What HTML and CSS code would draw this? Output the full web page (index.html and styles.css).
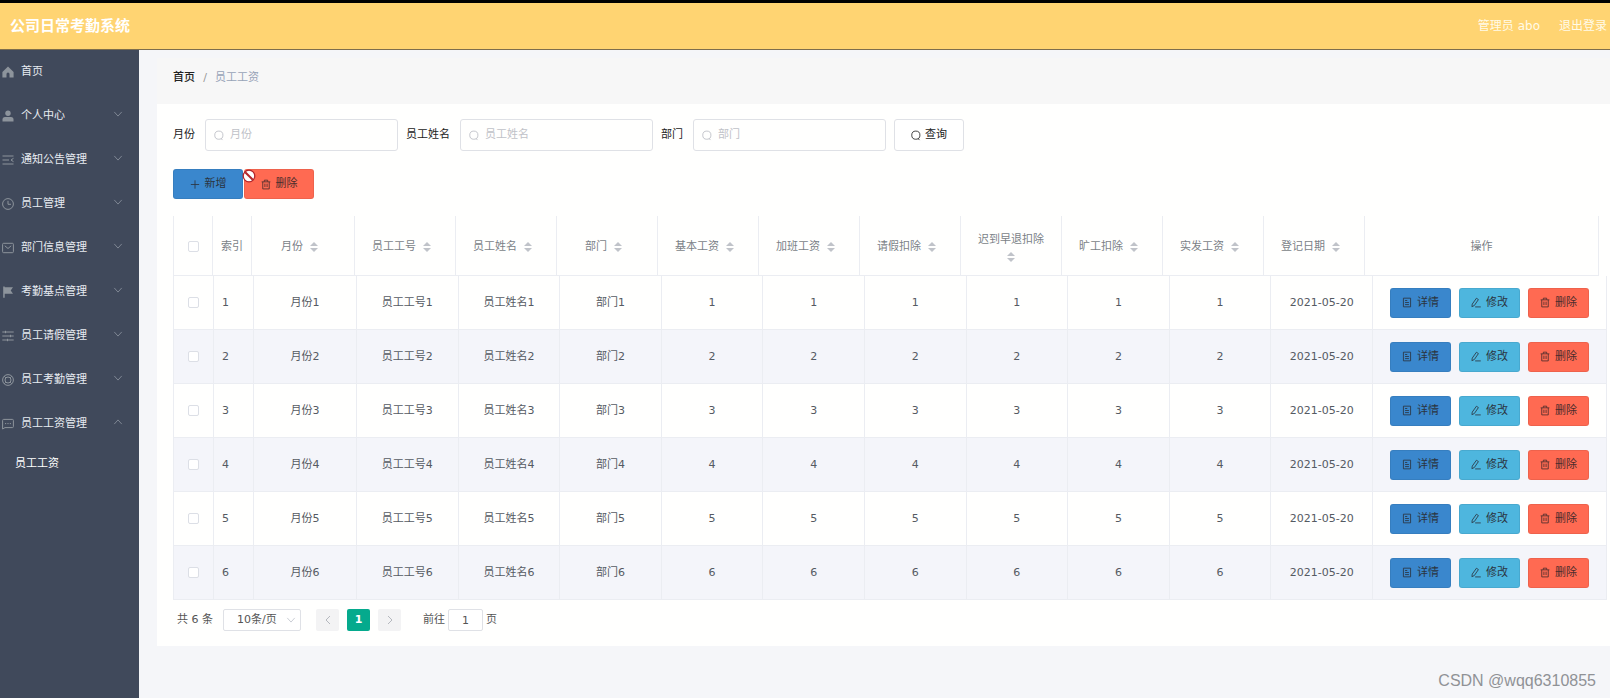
FILE: index.html
```html
<!DOCTYPE html>
<html lang="zh-CN">
<head>
<meta charset="utf-8">
<title>公司日常考勤系统</title>
<link rel="stylesheet" href="styles.css">
</head>
<body>
<svg class="sprite" aria-hidden="true">
  <symbol id="i-home" viewBox="0 0 12 12"><path fill="currentColor" d="M6 .6 11.6 6v5.6H7.5V8a1.5 1.5 0 0 0-3 0v3.600H.4V6z"/></symbol>
  <symbol id="i-user" viewBox="0 0 12 12"><circle cx="6" cy="3.200" r="2.700" fill="currentColor"/><path fill="currentColor" d="M.5 11.500V9.500Q.5 7 3 7h6q2.500 0 2.500 2.500v2z"/></symbol>
  <symbol id="i-fold" viewBox="0 0 12 12"><path class="ln" d="M.5 2h11M.5 6h6.500M.5 10h11M11.500 4.300 9 6l2.500 1.700"/></symbol>
  <symbol id="i-clock" viewBox="0 0 12 12"><circle class="ln" cx="6" cy="6" r="5.400"/><path class="ln" d="M6 2.800v3.500h3"/></symbol>
  <symbol id="i-mail" viewBox="0 0 12 12"><rect class="ln" x=".6" y="1.300" width="10.800" height="9.400" rx="1"/><path class="ln" d="M2.800 3.800 6 6.500l3.200-2.700"/></symbol>
  <symbol id="i-flag" viewBox="0 0 12 12"><path fill="currentColor" d="M1.200.5h1.500v.8H11L8.700 4.500 11 7.700H2.700v4H1.200z"/></symbol>
  <symbol id="i-oper" viewBox="0 0 12 12"><path class="ln" d="M.3 2h11.400M.3 6h11.400M.3 10h11.400M3.500.8v2.400M8.500 4.800v2.400M5.500 8.800v2.400"/></symbol>
  <symbol id="i-help" viewBox="0 0 12 12"><circle class="ln" cx="6" cy="6" r="5.400"/><circle class="ln" cx="6" cy="6" r="3"/><path class="ln" d="m2.200 2.200 1.600 1.600M9.800 2.200 8.200 3.800M2.200 9.800l1.600-1.600M9.800 9.800 8.200 8.200"/></symbol>
  <symbol id="i-chat" viewBox="0 0 12 12"><path class="ln" d="M1.600 1.400h8.800q1 0 1 1v6.200q0 1-1 1H3L.6 11V2.400q0-1 1-1z"/><path class="ln" d="M3 5.600h1.200M5.400 5.600h1.200M7.800 5.600H9"/></symbol>
  <symbol id="i-down" viewBox="0 0 12 12"><path class="ln" d="m1.500 3.500 4.500 5 4.500-5"/></symbol>
  <symbol id="i-up" viewBox="0 0 12 12"><path class="ln" d="m1.500 8.500 4.500-5 4.500 5"/></symbol>
  <symbol id="i-left" viewBox="0 0 12 12"><path class="ln" d="M8 2 4 6l4 4"/></symbol>
  <symbol id="i-right" viewBox="0 0 12 12"><path class="ln" d="m4 2 4 4-4 4"/></symbol>
  <symbol id="i-search" viewBox="0 0 12 12"><circle class="ln" cx="5.800" cy="5.600" r="4.900"/><path class="ln" d="m8.400 9.600 1.800 1.900"/></symbol>
  <symbol id="i-plus" viewBox="0 0 12 12"><path class="ln" d="M6 1v10M1 6h10"/></symbol>
  <symbol id="i-bin" viewBox="0 0 12 12"><path class="ln" d="M.8 2.800h10.400M4 2.600V.8h4v1.800M2.100 3v8.300h7.800V3M4.700 5v4M7.300 5v4"/></symbol>
  <symbol id="i-doc" viewBox="0 0 12 12"><path class="ln" d="M1.700.8h8.600v10.400H1.700zM3.700 3.600h2.600M3.700 6h4.600M3.700 8.500h4.600"/></symbol>
  <symbol id="i-edit" viewBox="0 0 12 12"><path class="ln" d="M6.500.9 8.900 2.500 4 9.600 1.100 11l.4-3.100zM5 11.300h6.700"/></symbol>
</svg>

<header class="topbar">
  <h1 class="brand">公司日常考勤系统</h1>
  <div class="account">
    <span>管理员 abo</span>
    <a href="#logout">退出登录</a>
  </div>
</header>

<div class="layout">
  <nav class="sidebar">
    <a class="item" href="#"><svg class="ico"><use href="#i-home"/></svg><span>首页</span></a>
    <a class="item" href="#"><svg class="ico"><use href="#i-user"/></svg><span>个人中心</span><svg class="arrow"><use href="#i-down"/></svg></a>
    <a class="item" href="#"><svg class="ico"><use href="#i-fold"/></svg><span>通知公告管理</span><svg class="arrow"><use href="#i-down"/></svg></a>
    <a class="item" href="#"><svg class="ico"><use href="#i-clock"/></svg><span>员工管理</span><svg class="arrow"><use href="#i-down"/></svg></a>
    <a class="item" href="#"><svg class="ico"><use href="#i-mail"/></svg><span>部门信息管理</span><svg class="arrow"><use href="#i-down"/></svg></a>
    <a class="item" href="#"><svg class="ico"><use href="#i-flag"/></svg><span>考勤基点管理</span><svg class="arrow"><use href="#i-down"/></svg></a>
    <a class="item" href="#"><svg class="ico"><use href="#i-oper"/></svg><span>员工请假管理</span><svg class="arrow"><use href="#i-down"/></svg></a>
    <a class="item" href="#"><svg class="ico"><use href="#i-help"/></svg><span>员工考勤管理</span><svg class="arrow"><use href="#i-down"/></svg></a>
    <a class="item" href="#"><svg class="ico"><use href="#i-chat"/></svg><span>员工工资管理</span><svg class="arrow"><use href="#i-up"/></svg></a>
    <a class="subitem" href="#">员工工资</a>
  </nav>

  <main class="main">
    <div class="crumbs"><a href="#">首页</a><span class="sep">/</span><span>员工工资</span></div>

    <section class="card">
      <form class="filters">
        <label for="f-month">月份</label>
        <div class="field"><svg><use href="#i-search"/></svg><input id="f-month" type="text" placeholder="月份"></div>
        <label for="f-name">员工姓名</label>
        <div class="field"><svg><use href="#i-search"/></svg><input id="f-name" type="text" placeholder="员工姓名"></div>
        <label for="f-dept">部门</label>
        <div class="field"><svg><use href="#i-search"/></svg><input id="f-dept" type="text" placeholder="部门"></div>
        <button class="btn plain" type="button"><svg><use href="#i-search"/></svg>查询</button>
      </form>

      <div class="actions">
        <button class="btn blue" type="button"><svg><use href="#i-plus"/></svg>新增</button>
        <button class="btn red" type="button"><svg><use href="#i-bin"/></svg>删除</button>
        <svg class="pointer" viewBox="0 0 14 14" aria-hidden="true"><circle cx="7" cy="7" r="5.800" fill="#fff" stroke="#b3262c" stroke-width="1.300"/><path d="m3.200 3.200 7.600 7.600" stroke="#b3262c" stroke-width="2"/></svg>
      </div>

      <table class="grid head">
        <colgroup><col class="c-tick"><col class="c-tick"><col class="c-month"><col span="10"><col class="c-ops"></colgroup>
        <thead><tr id="head-row"></tr></thead>
      </table>
      <table class="grid body">
        <colgroup><col class="c-tick"><col class="c-tick"><col class="c-month"><col span="10"><col class="c-ops"></colgroup>
        <tbody id="rows"></tbody>
      </table>

      <div class="pager">
        <span>共 6 条</span>
        <div class="size"><select aria-label="每页条数"><option>10条/页</option></select><svg><use href="#i-down"/></svg></div>
        <div class="pages">
          <button type="button" aria-label="上一页" disabled><svg><use href="#i-left"/></svg></button>
          <button type="button" class="on">1</button>
          <button type="button" aria-label="下一页" disabled><svg><use href="#i-right"/></svg></button>
        </div>
        <label class="jump">前往<input type="text" value="1">页</label>
      </div>
    </section>
  </main>
</div>
<div class="watermark">CSDN @wqq6310855</div>
<script src="app.js"></script>
</body>
</html>
```

FILE: styles.css
```css
* { box-sizing: border-box; }
body {
  margin: 0;
  min-height: 100vh;
  display: flex;
  flex-direction: column;
  position: relative;
  background: #f5f6f9;
  color: #333;
  font: 11px/16px "DejaVu Sans", "Noto Sans CJK SC", sans-serif;
}
a { color: inherit; text-decoration: none; }
button, input, select { font: inherit; color: inherit; }
svg { width: 12px; height: 12px; flex: none; }
.ln { fill: none; stroke: currentColor; stroke-width: 1; }
.sprite { position: absolute; width: 0; height: 0; }

.topbar {
  display: flex;
  align-items: center;
  justify-content: space-between;
  height: 50px;
  padding: 0 3px 0 10px;
  border-top: 3px solid #000;
  border-bottom: 1px solid #7d6d4c;
  background: #ffd472;
  color: #fff;
}
.brand { margin: 0; font-size: 15px; line-height: 24px; font-weight: 700; }
.account { display: flex; gap: 19px; font-size: 12px; color: #fffbe8; }

.layout { flex: 1; display: flex; }
.sidebar { width: 139px; flex: none; background: #40495b; color: #e8ecf2; }
.item { display: flex; align-items: center; gap: 7px; height: 44px; padding: 0 16px 0 2px; }
.ico { color: #8d949c; }
.arrow { width: 10px; height: 10px; margin: 0 0 4px auto; color: #8a919e; }
.subitem { display: flex; align-items: center; height: 36px; padding-left: 15px; color: #fff; }

.main { flex: 1; min-width: 0; padding: 8px 0 52px 18px; }
.crumbs { display: flex; align-items: center; height: 46px; padding: 0 16px 6px; background: #f7f7f7; color: #97a3b8; }
.crumbs a { color: #222; font-weight: 500; }
.sep { width: 20px; text-align: center; color: #999; }

.card { padding: 15px 0 15px 16px; background: #fffffe; }
.filters { display: flex; align-items: center; gap: 8px; color: #222; }
.filters label { margin-right: 2px; }
.field { display: flex; align-items: center; gap: 6px; width: 193px; height: 32px; padding: 0 8px; border: 1px solid #dfe1e6; border-radius: 3px; color: #b9bcc3; }
.field input { flex: 1; min-width: 0; padding: 0; border: 0; outline: 0; background: none; color: #333; }
.field input::placeholder { color: #bfc2c8; }
.field svg, .btn svg { width: 10px; height: 11px; }

.btn { display: flex; align-items: center; justify-content: center; gap: 5px; height: 30px; width: 61px; padding: 0; border: 1px solid #0001; border-radius: 3px; color: #2b3440; }
.btn.plain { width: 70px; height: 32px; gap: 4px; background: #fff; border-color: #dfe1e6; color: #222; }
.blue { background: #3a87cd; }
.cyan { background: #4eb6de; }
.red { background: #ff6a52; color: #4a2c2c; }
.actions { display: flex; gap: 1px; margin: 18px 0 17px; position: relative; }
.actions .btn { width: 70px; }
.pointer { position: absolute; left: 69px; top: 0; width: 14px; height: 14px; }

.grid { table-layout: fixed; border-collapse: separate; border-spacing: 0; border-left: 1px solid #ebedf2; color: #555a62; }
.head { width: calc(100% - 11px); color: #7b7f87; }
.body { width: calc(100% - 3px); }
.c-tick { width: 40px; }
.head .c-tick { width: 39px; }
.c-month { width: 103px; }
.c-ops { width: 234px; }
.grid th, .grid td { padding: 0 8px; border-right: 1px solid #ebedf2; border-bottom: 1px solid #ebedf2; text-align: center; font-weight: 400; }
.grid th { height: 60px; padding-top: 2px; }
.grid td { height: 54px; }
.grid .idx { text-align: left; }
.body tr:nth-child(even) { background: #f4f5fa; }
.title { display: flex; flex-wrap: wrap; align-items: center; justify-content: center; gap: 4px 7px; padding-right: 7px; }
.title.long { flex-direction: column; padding-right: 0; }
.sort { display: flex; flex-direction: column; gap: 2px; }
.sort::before, .sort::after { content: ""; border: 4px solid transparent; }
.sort::before { border-top: 0; border-bottom-color: #c0c3c9; }
.sort::after { border-bottom: 0; border-top-color: #c0c3c9; }
.tick { appearance: none; display: block; width: 11px; height: 11px; margin: 0 auto; border: 1px solid #dcdfe6; border-radius: 2px; background: #fff; }
.ops { display: flex; justify-content: center; gap: 8px; }

.pager { display: flex; align-items: center; height: 22px; margin: 9px 4px 0; color: #555; }
.size { position: relative; width: 78px; height: 22px; margin: 0 15px 0 10px; }
.size select { appearance: none; width: 100%; height: 100%; padding: 0 0 0 13px; border: 1px solid #dfe1e6; border-radius: 2px; background: #fff; }
.size svg { position: absolute; right: 5px; top: 6px; width: 10px; height: 10px; color: #c0c4cc; }
.pages { display: flex; gap: 8px; }
.pages button { display: flex; align-items: center; justify-content: center; width: 23px; height: 22px; padding: 0; border: 0; border-radius: 2px; background: #f3f3f4; color: #b5b8be; }
.pages .on { background: #05aa8d; color: #fff; font-weight: 700; }
.jump { display: flex; align-items: center; gap: 3px; margin-left: 22px; }
.jump input { width: 35px; height: 22px; padding: 0; border: 1px solid #dfe1e6; border-radius: 2px; background: #fff; text-align: center; }

.watermark { position: absolute; right: 14px; bottom: 5px; font: 16px/24px "Liberation Sans", sans-serif; color: #909296; }
```

FILE: app.js
```js
const titles = ["月份", "员工工号", "员工姓名", "部门", "基本工资", "加班工资", "请假扣除", "迟到早退扣除", "旷工扣除", "实发工资", "登记日期"];
const tick = (label) => `<input class="tick" type="checkbox" aria-label="${label}">`;
const button = (tone, icon, text) => `<button class="btn ${tone}" type="button"><svg><use href="#i-${icon}"/></svg>${text}</button>`;

document.getElementById("head-row").innerHTML =
  `<th>${tick("全选")}</th><th class="idx">索引</th>` +
  titles.map((t) => `<th><span class="title${t.length > 4 ? " long" : ""}">${t}<i class="sort"></i></span></th>`).join("") +
  "<th>操作</th>";

document.getElementById("rows").innerHTML = [1, 2, 3, 4, 5, 6].map((n) => {
  const cells = [`月份${n}`, `员工工号${n}`, `员工姓名${n}`, `部门${n}`, n, n, n, n, n, n, "2021-05-20"];
  return `<tr><td>${tick("选择第" + n + "行")}</td><td class="idx">${n}</td>` +
    cells.map((c) => `<td>${c}</td>`).join("") +
    `<td><div class="ops">${button("blue", "doc", "详情")}${button("cyan", "edit", "修改")}${button("red", "bin", "删除")}</div></td></tr>`;
}).join("");
```
